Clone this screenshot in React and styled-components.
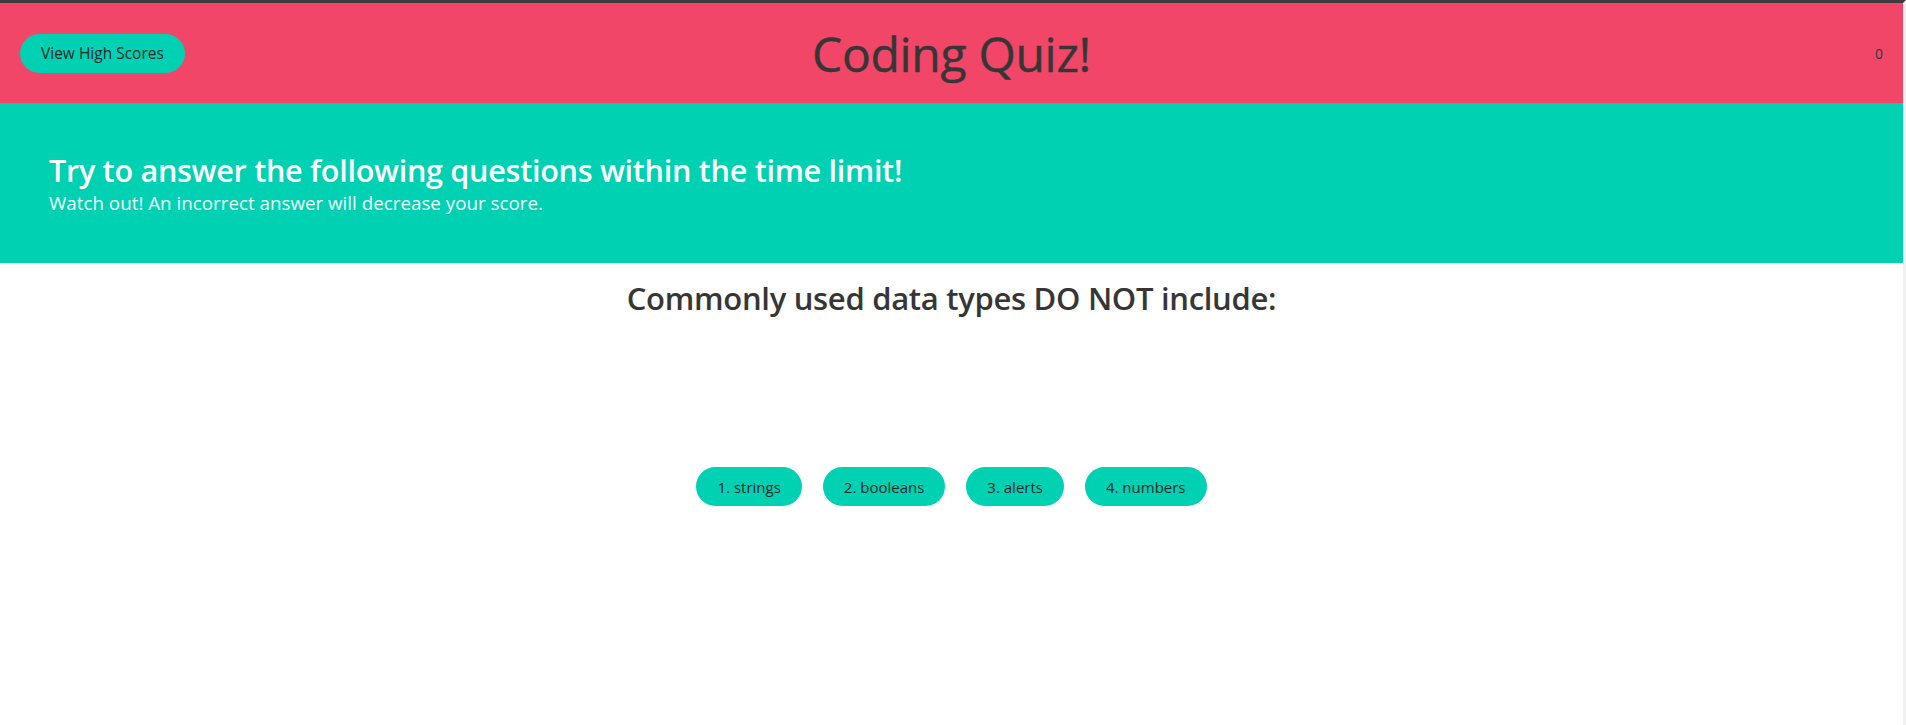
import styled, { createGlobalStyle } from "styled-components";

const GlobalStyle = createGlobalStyle`
  html, body {
    margin: 0;
    padding: 0;
    background: #ffffff;
  }
  body {
    font-family: "Open Sans", "Noto Sans", "Liberation Sans", sans-serif;
    color: #363636;
  }
`;

const Page = styled.div`
  min-height: 725px;
  border-top: 3px solid #3c3c3c;
  border-right: 3px solid #f1f1f1;
  box-sizing: border-box;
`;

const Header = styled.header`
  display: grid;
  grid-template-columns: 1fr auto 1fr;
  align-items: center;
  height: 100px;
  padding: 0 20px;
  background: #f14668;
`;

const Title = styled.h1`
  margin: 0;
  font-size: 48px;
  font-weight: 500;
  color: #363636;
  letter-spacing: -0.3px;
  -webkit-text-stroke: 0.4px #363636;
`;

const Score = styled.span`
  justify-self: end;
  font-size: 14px;
  color: #363636;
`;

const PillButton = styled.button`
  height: 39px;
  padding: 0 ${({ $start }) => ($start ? "21px" : "21px")};
  border: none;
  border-radius: 999px;
  background: #00d1b2;
  color: #1f2a28;
  font-family: inherit;
  font-size: ${({ $start }) => ($start ? "15.5px" : "15px")};
  cursor: pointer;
  justify-self: ${({ $start }) => ($start ? "start" : "auto")};
`;

const Hero = styled.section`
  height: 160px;
  box-sizing: border-box;
  padding: 0 49px;
  display: flex;
  flex-direction: column;
  justify-content: center;
  background: #00d1b2;
  color: #ffffff;
`;

const HeroTitle = styled.h2`
  margin: 2px 0 0;
  font-size: 30.6px;
  font-weight: 600;
  line-height: 1.2;
  letter-spacing: -0.3px;
`;

const HeroSubtitle = styled.p`
  margin: 2px 0 0;
  font-size: 18.8px;
  line-height: 1.3;
  color: #f5fffd;
`;

const Quiz = styled.main`
  display: flex;
  flex-direction: column;
  align-items: center;
`;

const Question = styled.h3`
  margin: 14px 0 0;
  font-size: 31px;
  font-weight: 600;
  letter-spacing: -0.3px;
  color: #363636;
`;

const Choices = styled.div`
  display: flex;
  gap: 21px;
  margin-top: 148px;
`;

const choices = ["1. strings", "2. booleans", "3. alerts", "4. numbers"];

export default function App() {
  return (
    <>
      <GlobalStyle />
      <Page>
        <Header>
          <PillButton $start>View High Scores</PillButton>
          <Title>Coding Quiz!</Title>
          <Score>0</Score>
        </Header>
        <Hero>
          <HeroTitle>Try to answer the following questions within the time limit!</HeroTitle>
          <HeroSubtitle>Watch out! An incorrect answer will decrease your score.</HeroSubtitle>
        </Hero>
        <Quiz>
          <Question>Commonly used data types DO NOT include:</Question>
          <Choices>
            {choices.map((c) => (
              <PillButton key={c}>{c}</PillButton>
            ))}
          </Choices>
        </Quiz>
      </Page>
    </>
  );
}
